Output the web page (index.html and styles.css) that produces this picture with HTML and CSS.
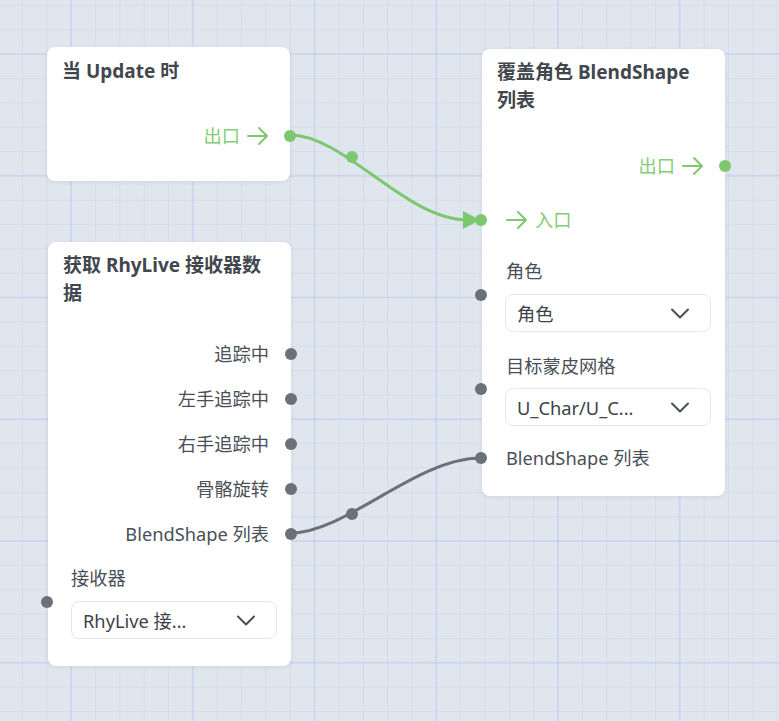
FILE: index.html
```html
<!DOCTYPE html>
<html lang="zh">
<head>
<meta charset="utf-8">
<title>Blueprint</title>
<link rel="stylesheet" href="styles.css">
</head>
<body>
<div class="canvas">
  <svg class="edges" width="779" height="721" viewBox="0 0 779 721">
    <path class="edge-exec" d="M290 135 C345 135 405 220 468 220"/>
    <polygon class="edge-exec-head" points="463,211 480,220 463,229"/>
    <circle class="edge-exec-dot" cx="352" cy="157" r="6"/>
    <path class="edge-data" d="M291 533 C346 533 416 458 481 458"/>
    <circle class="edge-data-dot" cx="352" cy="514" r="6"/>
  </svg>

  <div class="node n-update">
    <div class="title">当 Update 时</div>
    <div class="port out exec mt-37">
      <span>出口</span>
      <svg class="arrow" width="22" height="20" viewBox="0 0 22 20"><path d="M1 10 H20 M12 2 L20 10 L12 18"/></svg>
      <span class="dot green"></span>
    </div>
  </div>

  <div class="node n-override">
    <div class="title">覆盖角色 BlendShape 列表</div>
    <div class="port out exec mt-38">
      <span>出口</span>
      <svg class="arrow" width="22" height="20" viewBox="0 0 22 20"><path d="M1 10 H20 M12 2 L20 10 L12 18"/></svg>
      <span class="dot green"></span>
    </div>
    <div class="port in exec mt-26">
      <svg class="arrow" width="22" height="20" viewBox="0 0 22 20"><path d="M1 10 H20 M12 2 L20 10 L12 18"/></svg>
      <span>入口</span>
      <span class="dot green"></span>
    </div>
    <div class="field mt-23">
      <div class="label">角色</div>
      <div class="select mt-9">
        <span>角色</span>
        <svg class="chev" width="18" height="11" viewBox="0 0 18 11"><path d="M1 1.5 L9 9.5 L17 1.5"/></svg>
      </div>
      <span class="dot"></span>
    </div>
    <div class="field mt-20">
      <div class="label">目标蒙皮网格</div>
      <div class="select mt-8">
        <span>U_Char/U_C...</span>
        <svg class="chev" width="18" height="11" viewBox="0 0 18 11"><path d="M1 1.5 L9 9.5 L17 1.5"/></svg>
      </div>
      <span class="dot"></span>
    </div>
    <div class="port in mt-18">
      <span>BlendShape 列表</span>
      <span class="dot"></span>
    </div>
  </div>

  <div class="node n-receiver">
    <div class="title">获取 RhyLive 接收器数据</div>
    <div class="outputs">
      <div class="port out row45"><span>追踪中</span><span class="dot"></span></div>
      <div class="port out row45"><span>左手追踪中</span><span class="dot"></span></div>
      <div class="port out row45"><span>右手追踪中</span><span class="dot"></span></div>
      <div class="port out row45"><span>骨骼旋转</span><span class="dot"></span></div>
      <div class="port out row45"><span>BlendShape 列表</span><span class="dot"></span></div>
    </div>
    <div class="field mt-8">
      <div class="label">接收器</div>
      <div class="select mt-9">
        <span>RhyLive 接...</span>
        <svg class="chev" width="18" height="11" viewBox="0 0 18 11"><path d="M1 1.5 L9 9.5 L17 1.5"/></svg>
      </div>
      <span class="dot"></span>
    </div>
  </div>
</div>
</body>
</html>
```

FILE: styles.css
```css
* { box-sizing: border-box; }

html, body {
  margin: 0;
  padding: 0;
}

body {
  font-family: "Noto Sans", "Noto Sans CJK SC", sans-serif;
  color: #4a4f57;
}

.canvas {
  position: relative;
  width: 779px;
  height: 721px;
  overflow: hidden;
  background-color: #dfe6ee;
  background-image:
    linear-gradient(to right, rgba(150, 165, 240, 0.17) 2px, transparent 2px),
    linear-gradient(to bottom, rgba(150, 165, 240, 0.17) 2px, transparent 2px),
    linear-gradient(to right, rgba(160, 175, 240, 0.16) 1px, transparent 1px),
    linear-gradient(to bottom, rgba(160, 175, 240, 0.16) 1px, transparent 1px);
  background-size: 121.75px 121.75px, 121.75px 121.75px, 24.35px 24.35px, 24.35px 24.35px;
  background-position: 70px 53px, 70px 53px, 22px 5px, 22px 5px;
}

.edges {
  position: absolute;
  left: 0;
  top: 0;
}

.edge-exec {
  fill: none;
  stroke: #7cc86e;
  stroke-width: 3;
}
.edge-exec-head, .edge-exec-dot { fill: #7cc86e; }

.edge-data {
  fill: none;
  stroke: #6b717a;
  stroke-width: 3;
}
.edge-data-dot { fill: #6b717a; }

.node {
  position: absolute;
  width: 243px;
  background: #ffffff;
  border-radius: 8px;
  box-shadow: 0 1px 4px rgba(60, 70, 90, 0.10);
}

.n-update { left: 47px; top: 47px; padding: 10px 0 31px; }
.n-override { left: 482px; top: 49px; padding: 9px 0 24px; }
.n-receiver { left: 48px; top: 242px; padding: 9px 0 27px; }

.title {
  padding: 0 15px;
  font-size: 19px;
  line-height: 28px;
  font-weight: 700;
  color: #42474e;
}

.port {
  position: relative;
  display: flex;
  align-items: center;
  gap: 9px;
  height: 28px;
  font-size: 18.26px;
  line-height: 28px;
  padding: 0 23px 0 24px;
  white-space: nowrap;
}
.port.out { justify-content: flex-end; padding-right: 22px; }
.port.in { justify-content: flex-start; }
.port.exec { color: #84cc77; gap: 7px; }
.port.out.exec { padding-right: 21px; }

.row45 { height: 45px; line-height: 45px; padding-right: 23px; }

.outputs { margin-top: 24px; }

.arrow path {
  fill: none;
  stroke: #7cc86e;
  stroke-width: 2;
  stroke-linecap: round;
  stroke-linejoin: round;
}

.dot {
  position: absolute;
  top: 50%;
  width: 12px;
  height: 12px;
  margin-top: -6px;
  border-radius: 50%;
  background: #6b717a;
}
.dot.green { background: #7cc86e; }
.port.out .dot { right: -6px; }
.port.in .dot, .field .dot { left: -7px; }

.field {
  position: relative;
}

.label {
  padding-left: 24px;
  height: 28px;
  font-size: 18.26px;
  line-height: 28px;
}

.n-receiver .label { padding-left: 23px; }

.select {
  display: flex;
  align-items: center;
  justify-content: space-between;
  width: 206px;
  height: 38px;
  margin-left: 23px;
  padding: 0 21px 0 11px;
  border: 1px solid #e3e6eb;
  border-radius: 8px;
  font-size: 18.26px;
  color: #3d4249;
  white-space: nowrap;
}

.chev path {
  fill: none;
  stroke: #4a4f57;
  stroke-width: 2;
  stroke-linecap: round;
  stroke-linejoin: round;
}

.mt-8 { margin-top: 8px; }
.mt-9 { margin-top: 9px; }
.mt-18 { margin-top: 18px; }
.mt-20 { margin-top: 20px; }
.mt-23 { margin-top: 23px; }
.mt-26 { margin-top: 26px; }
.mt-37 { margin-top: 37px; }
.mt-38 { margin-top: 38px; }
```
